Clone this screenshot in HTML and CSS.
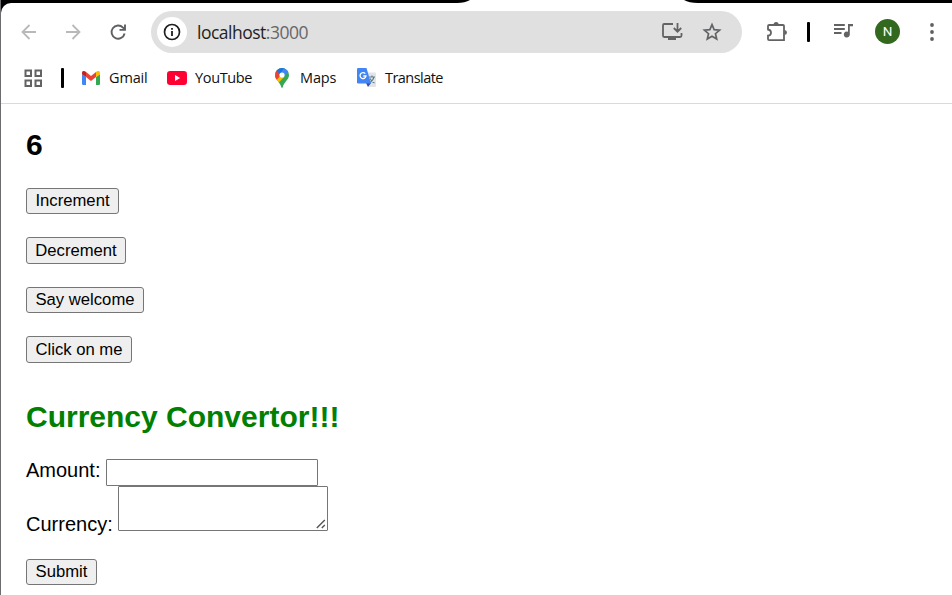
FILE: index.html
```
<!DOCTYPE html>
<html lang="en">
<head>
<meta charset="utf-8">
<title>localhost:3000</title>
<link rel="stylesheet" href="styles.css">
</head>
<body>
<div class="window">
  <div class="tabstrip"><svg width="952" height="4" viewBox="0 0 952 4"><path fill="#000" d="M0 0H470Q465 3 457 3H0ZM684 0H952V3H698Q689 3 684 0Z"/></svg></div>
  <header class="browser">
    <div class="toolbar">
      <svg class="back" width="16" height="16" viewBox="0 0 16 16" fill="none" stroke="#b9b9b9" stroke-width="1.8"><path d="M15 8H2M8.500 1 1.500 8l7 7"/></svg>
      <svg class="forward" width="16" height="16" viewBox="0 0 16 16" fill="none" stroke="#b9b9b9" stroke-width="1.8"><path d="M1 8h13M7.500 1l7 7-7 7"/></svg>
      <svg class="reload" width="18" height="18" viewBox="0 0 18 18" fill="none" stroke="#5f6062" stroke-width="1.9"><path d="M15.600 10.500A6.600 6.600 0 1 1 14 4.600L15.800 6.500M16 1.500V6.900H10.500"/></svg>
      <div class="address">
        <span class="info"><svg width="18" height="18" viewBox="0 0 18 18" fill="none" stroke="#1f1f1f" stroke-width="1.7"><circle cx="9" cy="9" r="7.500"/><path d="M9 8v5M9 5v1.800" stroke-width="1.800"/></svg></span>
        <span class="url">localhost<span class="port">:3000</span></span>
        <svg class="install" width="22" height="20" viewBox="0 0 22 20" fill="none" stroke="#626365" stroke-width="1.800"><path d="M12 2H3.200Q2 2 2 3.200V13.800Q2 15 3.200 15H19Q20.500 15 20.500 13.500V11M16.500 1v8.500M12.800 6l3.700 3.700L20.200 6"/><path d="M7 15h8v3H7z" fill="#626365" stroke="none"/></svg>
        <svg class="star" width="20" height="20" viewBox="0 0 20 20" fill="none" stroke="#626365" stroke-width="1.700"><path d="m10 2.600 2.150 5.050 5.450.45-4.150 3.600 1.250 5.350L10 14.200l-4.700 2.850 1.250-5.350L2.400 8.100l5.450-.45z"/></svg>
      </div>
      <svg class="puzzle" width="22" height="22" viewBox="0 0 22 22"><path d="M3.200 4H17Q18 4 18 5v14.200H3.200Q2 19.200 2 18v-3.300Q5 14.500 5 11.700T2 8.500V5Q2 4 3.200 4Z" fill="none" stroke="#626365" stroke-width="1.800"/><path d="M7.600 3.500a2.500 2.500 0 0 1 5 0zM18.500 9a2.500 2.500 0 0 1 0 5z" fill="#626365"/></svg>
      <span class="divider"></span>
      <svg class="music" width="20" height="18" viewBox="0 0 20 18"><path d="M1 3h10.800M1 7h10.800M1 11h7.500" stroke="#626365" stroke-width="1.900"/><path d="M15 2h5v2.200h-3.200v8.300a3 3 0 1 1-1.800-2.700z" fill="#626365"/></svg>
      <span class="avatar">N</span>
      <svg class="menu" width="6" height="20" viewBox="0 0 6 20" fill="#5f6062"><circle cx="3" cy="3" r="1.900"/><circle cx="3" cy="10" r="1.900"/><circle cx="3" cy="17" r="1.900"/></svg>
    </div>
    <nav class="bookmarks">
      <svg class="apps" width="19" height="19" viewBox="0 0 19 19" fill="none" stroke="#626365" stroke-width="2"><path d="M1.500 1.500h5.500v5.500H1.500zM11.500 1.500H17v5.500h-5.500zM1.500 11.500H7V17H1.500zM11.500 11.500H17V17h-5.500z"/></svg>
      <span class="divider small"></span>
      <a class="bookmark gmail"><svg width="18" height="14" viewBox="0 0 18 14"><path fill="#4285f4" d="M0 3l4 3v8H1.300Q0 14 0 12.700z"/><path fill="#34a853" d="M14 6l4-3v9.700Q18 14 16.700 14H14z"/><path fill="#ea4335" d="M4 1l5 3.900L14 1v5L9 10 4 6z"/><path fill="#c5221f" d="M0 3V2Q0-.8 3 .3L4 1v5.100L0 3.200z"/><path fill="#fbbc04" d="M18 3V2Q18-.8 15 .3L14 1v5.100l4-2.900z"/></svg><span>Gmail</span></a>
      <a class="bookmark youtube"><svg width="20" height="14" viewBox="0 0 20 14"><rect width="20" height="14" rx="3.200" fill="#ff0033"/><path d="m8 4 5.200 3L8 10z" fill="#fff"/></svg><span>YouTube</span></a>
      <a class="bookmark maps"><svg width="14" height="20" viewBox="0 0 14 20"><defs><clipPath id="pin"><path d="M7 0a7 7 0 0 1 7 7c0 5-5 6.500-6.300 12.300Q7 20.700 6.300 19.300C5 13.500 0 12 0 7a7 7 0 0 1 7-7z"/></clipPath></defs><g clip-path="url(#pin)"><path fill="#34a853" d="M0 0h14v20H0z"/><path fill="#fbbc04" d="M0 6h8L9 9l-6.500 7L0 12z"/><path fill="#ea4335" d="M0 2l2-.5L7 6l-5.500 6L0 10z"/><path fill="#1a73e8" d="M1.500 2.500 4 0h6L5 6.500z"/><path fill="#4285f4" d="M9 0l5 3.500-5 5L5 6z"/></g><circle cx="7" cy="7" r="2.600" fill="#fff"/></svg><span>Maps</span></a>
      <a class="bookmark translate"><svg width="20" height="20" viewBox="0 0 20 20"><path fill="#e2e4e7" d="M8 4.500h10q1 0 1 1V18q0 1-1 1h-6z"/><path d="M12 9h6M15 7.500V9m2-.1q-.8 3.800-4.500 6M13 10.500q1.300 3 4.500 4.500" fill="none" stroke="#607d8b" stroke-width="1.100"/><path fill="#3949ab" d="M9 15h5l-3 4z"/><path fill="#4285f4" d="M1.200 0h8.300L14 15.500H1.200Q0 15.500 0 14.300V1.200Q0 0 1.200 0z"/><path d="M8.300 5.600A3 3 0 1 0 9 8H6.300" fill="none" stroke="#fff" stroke-width="1.300"/></svg><span>Translate</span></a>
    </nav>
  </header>
  <main class="page">
    <h2>6</h2>
    <button class="increment">Increment</button>
    <button class="decrement">Decrement</button>
    <button class="welcome">Say welcome</button>
    <button class="click">Click on me</button>
    <h2 class="title">Currency Convertor!!!</h2>
    <form class="form">
      <div class="field amount"><label for="amount">Amount:</label><input id="amount" type="text"></div>
      <div class="field currency"><label for="currency">Currency:</label><textarea id="currency"></textarea><svg class="grip" width="10" height="10" viewBox="0 0 10 10" fill="none" stroke="#555" stroke-width="1.400"><path d="M.8 9 8.800 1M5.800 9l3-3"/></svg></div>
      <button class="submit" type="button">Submit</button>
    </form>
  </main>
</div>
</body>
</html>
```
FILE: styles.css
```
* { box-sizing: border-box; }
body { margin: 0; background: #000; overflow: hidden; }
.window { width: 952px; height: 595px; display: flex; flex-direction: column; background: #000; border-left: 1px solid #6c6c6e; }
.window svg { display: block; flex: none; }
.tabstrip { height: 3px; background: #fff; overflow: hidden; flex: none; }
.tabstrip svg { margin-left: -1px; }
.browser { display: flow-root; height: 101px; flex: none; background: #fff; border-bottom: 1px solid #dadada; border-top-left-radius: 10px; font-family: "Open Sans", "Noto Sans", sans-serif; }
.toolbar { display: flex; align-items: center; height: 42px; margin-top: 8px; padding-left: 20px; }
.forward { margin-left: 28px; }
.back, .forward { margin-bottom: 1px; }
.reload { margin-left: 28px; margin-bottom: 1px; }
.address { display: flex; align-items: center; width: 591px; height: 42px; margin-left: 24px; border-radius: 21px; background: #e0e0e0; padding-left: 6px; }
.info { display: flex; align-items: center; justify-content: center; width: 30px; height: 30px; border-radius: 50%; background: #fff; }
.url { margin-left: 10px; font-size: 17.500px; letter-spacing: -0.500px; color: #1f1f1f; width: 464px; line-height: 24px; }
.port { color: #66676a; }
.star { margin-left: 19px; }
.puzzle { margin-left: 24px; }
.divider { width: 3px; height: 20px; border-radius: 1px; background: #000; margin-left: 19px; }
.music { margin-left: 23px; margin-bottom: 2px; }
.avatar { width: 25px; height: 25px; margin-left: 22px; margin-bottom: 1px; border-radius: 50%; background: #33691e; color: #fff; font: 400 13.500px/25px Roboto, sans-serif; text-align: center; }
.menu { margin-left: 29px; margin-bottom: 1px; }
.bookmarks { display: flex; align-items: center; height: 50px; padding-left: 23px; }
.divider.small { margin-left: 18px; }
.bookmark { display: flex; align-items: center; color: #111; font-size: 14.500px; line-height: 20px; white-space: nowrap; }
.gmail { width: 85px; margin-left: 18px; gap: 9px; letter-spacing: -0.150px; }
.youtube { width: 108px; gap: 8px; letter-spacing: -0.350px; }
.maps { width: 82px; gap: 11px; letter-spacing: -0.150px; }
.translate { gap: 8px; letter-spacing: -0.550px; }
.page { flex: 1; background: #fff; padding: 24px 0 0 25px; display: flex; flex-direction: column; align-items: flex-start; color: #000; font: 20px/23px "Liberation Sans", sans-serif; }
h2 { margin: 0; font-size: 30px; line-height: 34px; flex: none; }
button { display: block; flex: none; height: 27px; margin: 0; padding: 0; border: 1px solid #767676; border-radius: 3px; background: #efefef; color: #000; font: 16.667px/23px "Liberation Sans", sans-serif; }
.increment { width: 93px; height: 26px; margin-top: 26px; padding-bottom: 2px; }
.decrement { width: 100px; margin-top: 23px; }
.welcome { width: 118px; height: 26px; margin-top: 23px; padding-bottom: 2px; }
.click { width: 106px; margin-top: 23px; }
.title { color: #008000; margin-top: 37px; }
.form { margin-top: 25px; }
.field { display: flex; }
.amount { height: 27px; }
.amount label { width: 80px; }
.currency { height: 45px; position: relative; }
.currency label { width: 92px; margin-top: 27px; }
input, textarea { display: block; margin: 0; padding: 2px; border: 1px solid #767676; border-radius: 1px; background: #fff; font: 16.667px/20px "Liberation Sans", sans-serif; }
input { width: 212px; height: 27px; }
textarea { width: 210px; height: 45px; resize: none; }
.grip { position: absolute; left: 290px; bottom: 2px; }
.submit { width: 71px; height: 26px; margin-top: 28px; padding-bottom: 2px; }
```
